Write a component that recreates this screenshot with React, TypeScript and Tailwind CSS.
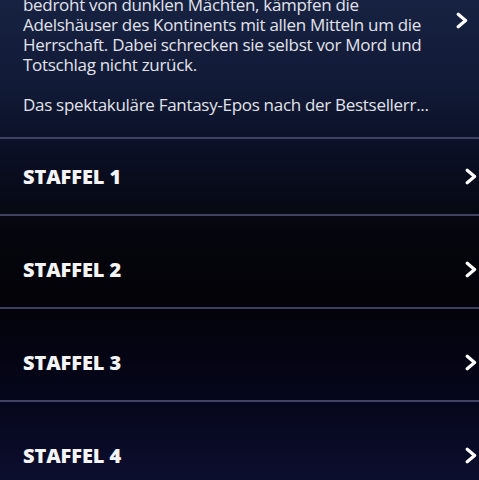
import React from "react";

const seasons = ["STAFFEL 1", "STAFFEL 2", "STAFFEL 3", "STAFFEL 4"];

function Chevron({ className = "" }: { className?: string }) {
  return (
    <svg
      viewBox="0 0 12 17"
      className={`h-[17px] w-[12px] ${className}`}
      fill="none"
      stroke="white"
      strokeWidth={3.2}
      strokeLinecap="round"
      strokeLinejoin="round"
    >
      <path d="M2.2 2.2 L9.6 8.5 L2.2 14.8" />
    </svg>
  );
}

export default function App() {
  return (
    <div className="h-[480px] w-full overflow-hidden bg-[linear-gradient(180deg,#172242_0%,#111a36_18%,#0a0f24_32%,#05060d_48%,#030308_62%,#05061a_82%,#0c0e2e_100%)] font-['Open_Sans',sans-serif] text-white">
      {/* description */}
      <div className="relative pl-[23px] pr-[40px] pb-[22px]">
        <p className="-mt-[5px] whitespace-nowrap text-[17px] leading-[20px] tracking-[-0.3px] text-[#e2e3ea]">
          bedroht von dunklen Mächten, kämpfen die
          <br />
          Adelshäuser des Kontinents mit allen Mitteln um die
          <br />
          Herrschaft. Dabei schrecken sie selbst vor Mord und
          <br />
          Totschlag nicht zurück.
          <br />
          <br />
          Das spektakuläre Fantasy-Epos nach der Bestsellerr...
        </p>
        <Chevron className="absolute right-[11px] top-[17px]" />
      </div>

      {/* seasons */}
      {seasons.map((s, i) => (
        <div key={s} className="border-t-2 border-[#3d4263]">
          <div
            className={`flex h-[75px] items-center justify-between pl-[23px] pr-[2px] ${
              i === 0 ? "" : "mt-[16px]"
            }`}
          >
            <span className="text-[20px] font-extrabold tracking-[-0.1px] text-[#f4f4f7]">
              {s}
            </span>
            <Chevron />
          </div>
        </div>
      ))}
    </div>
  );
}
